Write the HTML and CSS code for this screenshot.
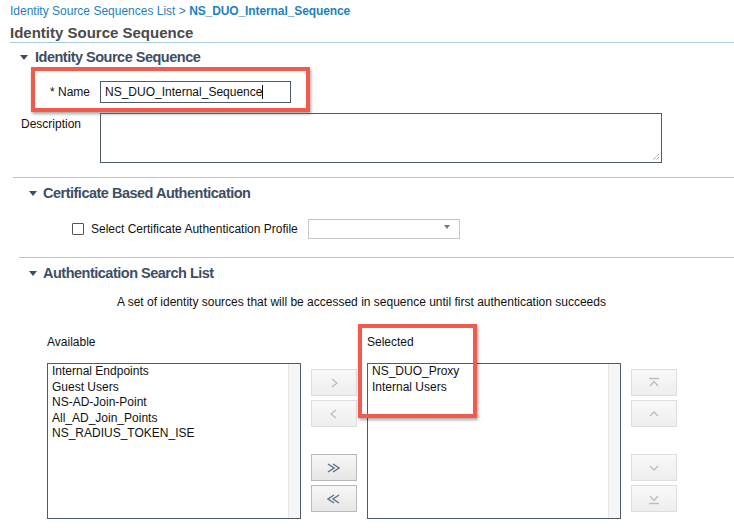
FILE: index.html
```html
<!DOCTYPE html>
<html>
<head>
<meta charset="utf-8">
<link rel="stylesheet" href="styles.css">
</head>
<body>
<div class="crumb"><span class="crumb-link">Identity Source Sequences List</span> &gt; <span class="crumb-cur">NS_DUO_Internal_Sequence</span></div>
<div class="title">Identity Source Sequence</div>

<div class="sec sec-first">
  <div class="sec-head head-first"><span class="tri"></span>Identity Source Sequence</div>
  <div class="name-row">
    <span class="name-label">* Name</span>
    <div class="name-input">NS_DUO_Internal_Sequence<span class="caret"></span></div>
  </div>
  <div class="desc-row">
    <span class="desc-label">Description</span>
    <div class="textarea"><svg class="grip" width="8" height="8" viewBox="0 0 8 8"><path d="M7 1L1 7M7 4L4 7" stroke="#777" stroke-width="1" stroke-dasharray="1 1" fill="none"/></svg></div>
  </div>
</div>

<div class="sec sec-cert">
  <div class="sec-head"><span class="tri"></span>Certificate Based Authentication</div>
  <div class="cert-row">
    <span class="checkbox"></span>
    <span class="cert-label">Select Certificate Authentication Profile</span>
    <div class="select"><span class="sel-arrow"></span></div>
  </div>
</div>

<div class="sec sec-search">
  <div class="sec-head"><span class="tri"></span>Authentication Search List</div>
  <div class="search-desc">A set of identity sources that will be accessed in sequence until first authentication succeeds</div>
  <div class="lists">
    <div class="col">
      <div class="col-label">Available</div>
      <div class="listbox">
        <div class="items">
          <div>Internal Endpoints</div>
          <div>Guest Users</div>
          <div>NS-AD-Join-Point</div>
          <div>All_AD_Join_Points</div>
          <div>NS_RADIUS_TOKEN_ISE</div>
        </div>
        <div class="track"></div>
      </div>
    </div>
    <div class="btns">
      <div class="btn"><svg width="12" height="12" viewBox="0 0 12 12"><path d="M4 2L9 6L4 10" stroke="#b9bfc5" stroke-width="1.4" fill="none"/></svg></div>
      <div class="btn"><svg width="12" height="12" viewBox="0 0 12 12"><path d="M8 2L3 6L8 10" stroke="#b9bfc5" stroke-width="1.4" fill="none"/></svg></div>
      <div class="btn btn-active btn-gap"><svg width="16" height="12" viewBox="0 0 16 12"><path d="M2 2L8 6L2 10M7 2L13 6L7 10" stroke="#5d7088" stroke-width="1.4" fill="none"/></svg></div>
      <div class="btn btn-active"><svg width="16" height="12" viewBox="0 0 16 12"><path d="M8 2L2 6L8 10M13 2L7 6L13 10" stroke="#5d7088" stroke-width="1.4" fill="none"/></svg></div>
    </div>
    <div class="col col-selected">
      <div class="col-label">Selected</div>
      <div class="listbox">
        <div class="items">
          <div>NS_DUO_Proxy</div>
          <div>Internal Users</div>
        </div>
        <div class="track"></div>
      </div>
      <div class="highlight"></div>
    </div>
    <div class="btns">
      <div class="btn"><svg width="12" height="12" viewBox="0 0 12 12"><path d="M1 1.5H11M2 9L6 4.5L10 9" stroke="#b9bfc5" stroke-width="1.4" fill="none"/></svg></div>
      <div class="btn"><svg width="12" height="12" viewBox="0 0 12 12"><path d="M2 8L6 4L10 8" stroke="#b9bfc5" stroke-width="1.4" fill="none"/></svg></div>
      <div class="btn btn-gap"><svg width="12" height="12" viewBox="0 0 12 12"><path d="M2 4L6 8L10 4" stroke="#b9bfc5" stroke-width="1.4" fill="none"/></svg></div>
      <div class="btn"><svg width="12" height="12" viewBox="0 0 12 12"><path d="M2 3L6 7.5L10 3M1 10.5H11" stroke="#b9bfc5" stroke-width="1.4" fill="none"/></svg></div>
    </div>
  </div>
</div>
</body>
</html>
```

FILE: styles.css
```css
html, body {
  margin: 0;
  padding: 0;
  background: #fff;
}
body {
  font-family: "Liberation Sans", Arial, sans-serif;
  font-size: 12px;
  color: #111;
  width: 734px;
  height: 532px;
  overflow: hidden;
}
.crumb {
  height: 22px;
  line-height: 22px;
  padding-left: 10px;
  color: #1f7fc0;
  font-size: 12px;
}
.crumb-cur {
  font-weight: bold;
  font-size: 12px;
  letter-spacing: -0.1px;
}
.title {
  margin-left: 10px;
  padding-top: 2px;
  height: 18px;
  line-height: 18px;
  font-size: 15px;
  font-weight: bold;
  color: #4a4a4a;
  border-bottom: 1px solid #a6ccd8;
}
.sec-head {
  font-weight: bold;
  font-size: 14.5px;
  letter-spacing: -0.5px;
  color: #3d4e65;
  display: flex;
  align-items: center;
  height: 30px;
  padding-left: 29px;
}
.tri {
  width: 0;
  height: 0;
  border-left: 4px solid transparent;
  border-right: 4px solid transparent;
  border-top: 5px solid #3d4e65;
  margin-right: 6px;
}
.head-first {
  box-sizing: border-box;
  height: 24px;
  padding-top: 4px;
  padding-left: 20px;
  align-items: flex-end;
  line-height: 20px;
}
.head-first .tri {
  margin-bottom: 7px;
  margin-right: 7px;
}
.name-row {
  margin-left: 31px;
  width: 279px;
  height: 45px;
  box-sizing: border-box;
  border: 4px solid #f25a4b;
  box-shadow: 1px 2px 3px rgba(0,0,0,0.35);
  display: flex;
  align-items: center;
  padding-top: 5px;
}
.name-label {
  width: 55px;
  text-align: right;
  margin-right: 10px;
  font-size: 12px;
}
.name-input {
  width: 191px;
  height: 22px;
  box-sizing: border-box;
  border: 1px solid #4f5b66;
  line-height: 20px;
  padding-left: 4px;
  font-size: 12px;
  display: flex;
  align-items: center;
}
.caret {
  display: inline-block;
  width: 1px;
  height: 14px;
  background: #000;
}
.desc-row {
  display: flex;
  margin-top: 1px;
  padding-left: 21px;
}
.desc-label {
  width: 79px;
  padding-top: 4px;
  font-size: 12px;
}
.textarea {
  width: 562px;
  height: 50px;
  box-sizing: border-box;
  border: 1px solid #4f5b66;
  display: flex;
  justify-content: flex-end;
  align-items: flex-end;
}
.grip {
  margin: 0 1px 1px 0;
}
.sec-cert {
  margin-top: 14px;
  margin-left: 13px;
  border-top: 1px solid #a6ccd8;
}
.sec-cert .sec-head {
  padding-left: 16px;
}
.cert-row {
  display: flex;
  align-items: center;
  margin-top: 11px;
  height: 20px;
  padding-left: 59px;
}
.checkbox {
  width: 10px;
  height: 10px;
  border: 1px solid #555;
  border-radius: 1px;
  margin-right: 7px;
}
.cert-label {
  font-size: 12px;
  margin-right: 10px;
}
.select {
  width: 152px;
  height: 20px;
  box-sizing: border-box;
  border: 1px solid #c9c9c9;
  position: relative;
}
.sel-arrow {
  position: absolute;
  right: 9px;
  top: 5px;
  width: 0;
  height: 0;
  border-left: 3px solid transparent;
  border-right: 3px solid transparent;
  border-top: 4px solid #777;
}
.sec-search {
  margin-top: 18px;
  margin-left: 19px;
  border-top: 1px solid #a6ccd8;
}
.sec-search .sec-head {
  padding-left: 10px;
}
.search-desc {
  height: 28px;
  line-height: 28px;
  padding-left: 98px;
  font-size: 12px;
}
.lists {
  display: flex;
  gap: 10px;
  padding-left: 28px;
  margin-top: 18px;
}
.col {
  display: flex;
  flex-direction: column;
  position: relative;
}
.col-label {
  height: 16px;
  line-height: 16px;
  margin-bottom: 13px;
  font-size: 12px;
}
.listbox {
  width: 254px;
  height: 156px;
  box-sizing: border-box;
  border: 1px solid #4f5b66;
  display: flex;
}
.items {
  flex: 1;
  padding: 0 0 0 4px;
  font-size: 12px;
  line-height: 15.5px;
}
.track {
  width: 11px;
  background: #f6f6f6;
  border-left: 1px solid #e6e6e6;
}
.highlight {
  position: absolute;
  left: -9px;
  top: -10px;
  width: 119px;
  height: 94px;
  box-sizing: border-box;
  border: 4px solid #f25a4b;
  box-shadow: 1px 2px 3px rgba(0,0,0,0.35);
}
.btns {
  display: flex;
  flex-direction: column;
  gap: 4px;
  padding-top: 35px;
}
.btn {
  width: 46px;
  height: 27px;
  box-sizing: border-box;
  border: 1px solid #dedede;
  background: linear-gradient(#f9f9f9, #eeeeee);
  display: flex;
  align-items: center;
  justify-content: center;
}
.btn-active {
  border-color: #b9b9b9;
  background: linear-gradient(#f7f7f7, #e6e6e6);
}
.btn-gap {
  margin-top: 23px;
}
```
